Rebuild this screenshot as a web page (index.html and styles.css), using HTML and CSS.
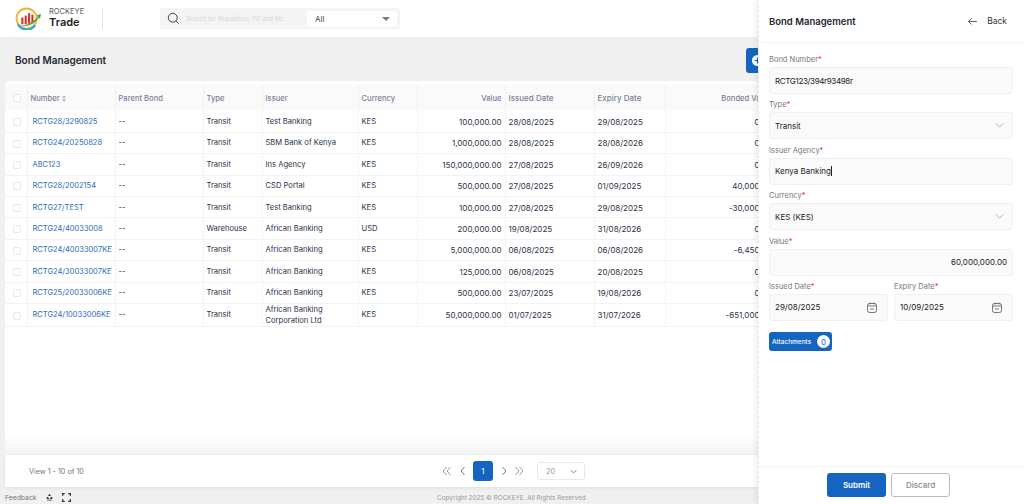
FILE: index.html
```html
<!DOCTYPE html>
<html lang="en">
<head>
<meta charset="utf-8">
<title>Bond Management</title>
<link rel="stylesheet" href="styles.css">
</head>
<body>
<div class="app">
  <header class="topbar">
    <div class="brand">
      <svg class="logo" viewBox="0 0 28 24" width="27" height="23">
        <circle cx="12" cy="12" r="10.5" fill="#fff" stroke="#f2b632" stroke-width="2"/>
        <path d="M3 18a10.5 10.5 0 0 0 18 1" fill="none" stroke="#35a8e0" stroke-width="2.4"/>
        <rect x="6.5" y="11" width="2.2" height="7" fill="#d9342b"/>
        <rect x="10" y="9" width="2.2" height="9" fill="#d9342b"/>
        <rect x="13.5" y="6.5" width="2.2" height="11" fill="#d9342b"/>
        <rect x="17" y="8" width="2.2" height="9" fill="#d9342b"/>
        <path d="M1 19c9 2 17-2 23-9l-2-1 5-2-1 6-1.200-2c-5 8-14 11-24 8z" fill="#4aa644"/>
      </svg>
      <div class="brand-text"><span class="brand-top">ROCKEYE</span><span class="brand-name">Trade</span></div>
    </div>
    <div class="search">
      <svg class="search-icon" viewBox="0 0 14 14" width="13" height="13"><circle cx="6.200" cy="6.200" r="4.800" fill="none" stroke="#333" stroke-width="1"/><path d="M9.800 9.800 12.500 12.500" stroke="#333" stroke-width="1"/></svg>
      <span class="search-hint">Search for Requisition, PO and Mc</span>
      <div class="search-select"><span>All</span><i class="caret"></i></div>
    </div>
  </header>

  <main class="content">
    <div class="page-head">
      <h1>Bond Management</h1>
      <span class="add-btn"><svg viewBox="0 0 11 11" width="11" height="11"><circle cx="5.500" cy="5.500" r="5.500" fill="#fff"/><path d="M2.500 5.500h6M5.500 2.500v6" stroke="#1565c0" stroke-width="1.200"/></svg></span>
    </div>
    <section class="card">
      <div class="table-wrap">
      <table>
        <colgroup>
          <col class="c-check"><col class="c-num"><col class="c-parent"><col class="c-type"><col class="c-issuer"><col class="c-cur"><col class="c-val"><col class="c-issued"><col class="c-expiry"><col class="c-bonded">
        </colgroup>
        <thead>
          <tr><th><i class="box"></i></th><th>Number <svg class="sort" viewBox="0 0 5 8" width="4" height="7"><path d="M2.500 0 5 3H0zM0 5h5L2.500 8z" fill="#aaa"/></svg></th><th>Parent Bond</th><th>Type</th><th>Issuer</th><th>Currency</th><th class="num">Value</th><th>Issued Date</th><th>Expiry Date</th><th class="num">Bonded Value</th></tr>
        </thead>
        <tbody>
          <tr><td><i class="box"></i></td><td class="link">RCTG28/3290825</td><td>--</td><td>Transit</td><td>Test Banking</td><td>KES</td><td class="num">100,000.00</td><td>28/08/2025</td><td>29/08/2025</td><td class="num">0.00</td></tr>
          <tr><td><i class="box"></i></td><td class="link">RCTG24/20250828</td><td>--</td><td>Transit</td><td>SBM Bank of Kenya</td><td>KES</td><td class="num">1,000,000.00</td><td>28/08/2025</td><td>28/08/2026</td><td class="num">0.00</td></tr>
          <tr><td><i class="box"></i></td><td class="link">ABC123</td><td>--</td><td>Transit</td><td>Ins Agency</td><td>KES</td><td class="num">150,000,000.00</td><td>27/08/2025</td><td>26/09/2026</td><td class="num">0.00</td></tr>
          <tr><td><i class="box"></i></td><td class="link">RCTG28/2002154</td><td>--</td><td>Transit</td><td>CSD Portal</td><td>KES</td><td class="num">500,000.00</td><td>27/08/2025</td><td>01/09/2025</td><td class="num">40,000.00</td></tr>
          <tr><td><i class="box"></i></td><td class="link">RCTG27/TEST</td><td>--</td><td>Transit</td><td>Test Banking</td><td>KES</td><td class="num">100,000.00</td><td>27/08/2025</td><td>29/08/2025</td><td class="num">-30,000.00</td></tr>
          <tr><td><i class="box"></i></td><td class="link">RCTG24/40033008</td><td>--</td><td>Warehouse</td><td>African Banking</td><td>USD</td><td class="num">200,000.00</td><td>19/08/2025</td><td>31/08/2026</td><td class="num">0.00</td></tr>
          <tr><td><i class="box"></i></td><td class="link">RCTG24/40033007KE</td><td>--</td><td>Transit</td><td>African Banking</td><td>KES</td><td class="num">5,000,000.00</td><td>06/08/2025</td><td>06/08/2026</td><td class="num">-6,450.00</td></tr>
          <tr><td><i class="box"></i></td><td class="link">RCTG24/30033007KE</td><td>--</td><td>Transit</td><td>African Banking</td><td>KES</td><td class="num">125,000.00</td><td>06/08/2025</td><td>20/08/2025</td><td class="num">0.00</td></tr>
          <tr><td><i class="box"></i></td><td class="link">RCTG25/20033006KE</td><td>--</td><td>Transit</td><td>African Banking</td><td>KES</td><td class="num">500,000.00</td><td>23/07/2025</td><td>19/08/2026</td><td class="num">0.00</td></tr>
          <tr><td><i class="box"></i></td><td class="link">RCTG24/10033006KE</td><td>--</td><td>Transit</td><td class="wrap">African Banking Corporation Ltd</td><td>KES</td><td class="num">50,000,000.00</td><td>01/07/2025</td><td>31/07/2026</td><td class="num">-651,000.00</td></tr>
        </tbody>
      </table>
      </div>
      <div class="spacer"></div>
      <div class="pager">
        <span class="view">View 1 - 10 of 10</span>
        <div class="pages">
          <svg class="pg" viewBox="0 0 10 10" width="10" height="10"><path d="M4.500 1 1 5l3.500 4M8.500 1 5 5l3.500 4" fill="none" stroke="#999" stroke-width="1"/></svg>
          <svg class="pg" viewBox="0 0 10 10" width="10" height="10"><path d="M6.500 1 3 5l3.500 4" fill="none" stroke="#777" stroke-width="1"/></svg>
          <span class="page-on">1</span>
          <svg class="pg" viewBox="0 0 10 10" width="10" height="10"><path d="M3.500 1 7 5 3.500 9" fill="none" stroke="#777" stroke-width="1"/></svg>
          <svg class="pg" viewBox="0 0 10 10" width="10" height="10"><path d="M1.500 1 5 5 1.500 9M5.500 1 9 5 5.500 9" fill="none" stroke="#999" stroke-width="1"/></svg>
          <div class="size"><span>20</span><svg viewBox="0 0 10 6" width="7" height="5"><path d="M1 1l4 4 4-4" fill="none" stroke="#666" stroke-width="1.200"/></svg></div>
        </div>
      </div>
    </section>
  </main>

  <footer class="footer">
    <div class="foot-left">
      <span>Feedback</span>
      <svg viewBox="0 0 12 12" width="9" height="9"><path d="M6 1 8 4H4zM2 6l2-1 1.500 3H2.500zM10 6 8 5 6.500 8h3z" fill="#333"/><path d="M3 9.500h6" stroke="#333"/></svg>
      <svg viewBox="0 0 10 10" width="9" height="9"><path d="M0 0h3v1.500H1.500V3H0zM7 0h3v3H8.500V1.500H7zM0 7h1.500v1.500H3V10H0zM8.500 7H10v3H7V8.500h1.500z" fill="#333"/></svg>
    </div>
    <span class="copy">Copyright 2025 © ROCKEYE. All Rights Reserved</span>
  </footer>
</div>

<aside class="panel">
  <div class="panel-head">
    <h2>Bond Management</h2>
    <span class="back"><svg viewBox="0 0 10 8" width="9" height="7"><path d="M4 .5.500 4 4 7.500M.5 4H10" fill="none" stroke="#222" stroke-width=".8"/></svg>Back</span>
  </div>
  <form class="form">
    <div class="field"><label>Bond Number<em>*</em></label><div class="input tight">RCTG123/394r93498r</div></div>
    <div class="field"><label>Type<em>*</em></label><div class="input">Transit<svg class="chev" viewBox="0 0 10 6" width="9" height="5"><path d="M.5.500l4.500 4.500L9.500.5" fill="none" stroke="#888" stroke-width=".8"/></svg></div></div>
    <div class="field"><label>Issuer Agency<em>*</em></label><div class="input">Kenya Banking<i class="cursor"></i></div></div>
    <div class="field"><label>Currency<em>*</em></label><div class="input">KES (KES)<svg class="chev" viewBox="0 0 10 6" width="9" height="5"><path d="M.5.500l4.500 4.500L9.500.5" fill="none" stroke="#888" stroke-width=".8"/></svg></div></div>
    <div class="field"><label>Value<em>*</em></label><div class="input right">60,000,000.00</div></div>
    <div class="two">
      <div class="field"><label>Issued Date<em>*</em></label><div class="input">29/08/2025<svg class="cal" viewBox="0 0 10 11" width="10" height="11"><rect x=".5" y="1.500" width="9" height="9" rx="2" fill="none" stroke="#555" stroke-width=".8"/><path d="M.5 4h9M3 .5v2M7 .5v2M3 7h4" stroke="#555" stroke-width=".8"/></svg></div></div>
      <div class="field"><label>Expiry Date<em>*</em></label><div class="input">10/09/2025<svg class="cal" viewBox="0 0 10 11" width="10" height="11"><rect x=".5" y="1.500" width="9" height="9" rx="2" fill="none" stroke="#555" stroke-width=".8"/><path d="M.5 4h9M3 .5v2M7 .5v2M3 7h4" stroke="#555" stroke-width=".8"/></svg></div></div>
    </div>
    <div class="attach"><span>Attachments</span><b>0</b></div>
  </form>
  <div class="panel-foot">
    <button type="button" class="btn primary">Submit</button>
    <button type="button" class="btn ghost">Discard</button>
  </div>
</aside>
</body>
</html>
```
FILE: styles.css
```css
* { box-sizing: border-box; }
html, body { margin: 0; height: 100%; overflow: hidden; }
body { display: flex; font-family: "Inter", "Liberation Sans", sans-serif; font-size: 8px; color: #2a3347; background: #f0f0f0; }
.app { width: 758px; flex: none; height: 504px; display: flex; flex-direction: column; overflow: hidden; }
.topbar { height: 37px; flex: none; background: #fff; display: flex; align-items: center; padding-left: 15px; }
.brand { display: flex; align-items: center; gap: 7px; width: 88px; height: 21px; border-right: 1px solid #e2e2e2; margin-top: -1px; }
.logo { flex: none; }
.brand-text { display: flex; flex-direction: column; line-height: 1; }
.brand-top { font-size: 7.500px; color: #555; }
.brand-name { font-size: 11px; font-weight: 600; color: #222; margin-top: 1px; }
.search { margin-left: 57px; width: 240px; height: 21px; background: #f4f4f4; border-radius: 3px; display: flex; align-items: center; padding: 0 3px 0 7px; }
.search-icon { flex: none; }
.search-hint { font-size: 6px; font-style: italic; color: #d4d4d4; margin-left: 6px; width: 117px; white-space: nowrap; overflow: hidden; }
.search-select { margin-left: 4px; flex: 1; height: 16px; background: #fff; border-radius: 2px; display: flex; align-items: center; justify-content: space-between; padding: 0 7px 0 8px; color: #444; font-size: 8px; }
.caret { width: 0; height: 0; border-left: 4px solid transparent; border-right: 4px solid transparent; border-top: 4.500px solid #777; }
.content { flex: 1; min-height: 0; display: flex; flex-direction: column; padding: 0 0 0 5px; }
.page-head { height: 44px; flex: none; display: flex; align-items: center; justify-content: space-between; padding: 2px 0 0 10px; }
h1 { margin: 0; font-size: 10px; font-weight: 600; color: #23272f; }
.add-btn { width: 24px; height: 25px; background: #1565c0; border-radius: 3px; display: flex; align-items: center; padding-left: 6px; margin-right: -12px; flex: none; }
.card { flex: 1; min-height: 0; display: flex; flex-direction: column; background: #fff; border-radius: 4px 0 0 4px; padding-top: 3px; }
.table-wrap { overflow: hidden; flex: none; }
table { border-collapse: collapse; table-layout: fixed; width: 770px; }
.c-check { width: 22px; } .c-num { width: 88px; } .c-parent { width: 88px; } .c-type { width: 59px; }
.c-issuer { width: 96px; } .c-cur { width: 59px; } .c-val { width: 88px; } .c-issued { width: 89px; }
.c-expiry { width: 71px; } .c-bonded { width: 110px; }
th { height: 27px; background: #fafafa; font-weight: 500; color: #7a7f9a; text-align: left; padding: 1px 3px 0; border-right: 1px solid #f0f0f0; font-size: 7.600px; white-space: nowrap; }
td { height: 21.400px; padding: 1px 3px 0; border-right: 1px solid #f3f3f3; border-bottom: 1px solid #f2f2f2; font-size: 7.600px; color: #2a3347; white-space: nowrap; line-height: 10.500px; }
td.num, td:nth-child(8), td:nth-child(9) { font-size: 8px; }
th:nth-child(8), th:nth-child(9) { font-size: 8px; }
.num { text-align: right; }
.link { color: #2b6cb8; padding-left: 5px; font-size: 7.500px; }
.wrap { white-space: normal; }
.box { display: block; width: 8px; height: 8px; margin-left: 5px; border: 1px solid #e8e8e8; border-radius: 2px; background: #fff; }
.sort { vertical-align: -1px; }
.spacer { flex: 1; min-height: 0; background: linear-gradient(#fff 85%, #f3f3f3); }
.pager { height: 32px; flex: none; position: relative; display: flex; align-items: center; padding-left: 24px; background: #fff; box-shadow: 0 1px 3px #ddd; }
.view { font-size: 7.200px; color: #777; }
.pages { position: absolute; left: 437px; top: 0; height: 100%; display: flex; align-items: center; gap: 5.500px; }
.pg { flex: none; }
.page-on { width: 20px; height: 20px; background: #1565c0; color: #fff; border-radius: 3px; display: flex; align-items: center; justify-content: center; font-size: 8px; }
.size { margin-left: 7.500px; width: 48px; height: 18px; border: 1px solid #e8e8e8; border-radius: 3px; display: flex; align-items: center; justify-content: space-between; padding: 0 7px 0 8px; color: #999; font-size: 7.500px; }
.footer { height: 17px; flex: none; position: relative; display: flex; align-items: center; padding: 4px 0 0 5px; color: #777; font-size: 6.800px; }
.foot-left { display: flex; align-items: center; gap: 8px; }
.copy { position: absolute; left: 437px; color: #999; font-size: 6.400px; }
.panel { position: relative; z-index: 1; width: 266px; flex: none; height: 504px; background: #fff; display: flex; flex-direction: column; box-shadow: -2px 0 6px rgba(0,0,0,.08); border-left: 1px dashed #e8e8e8; }
.panel-head { height: 43px; flex: none; display: flex; align-items: center; justify-content: space-between; padding: 0 17px 0 10px; border-bottom: 1px solid #f3f3f3; }
h2 { margin: 0; font-size: 9.500px; font-weight: 600; color: #23272f; }
.back { display: flex; align-items: center; gap: 10px; font-size: 8.500px; color: #333; }
.form { flex: 1; padding: 11px 11px 0 10px; display: flex; flex-direction: column; gap: 5.400px; }
.field { display: flex; flex-direction: column; gap: 2px; min-width: 0; }
label { font-size: 7.500px; color: #777; line-height: 11px; }
em { color: #e33; font-style: normal; }
.input { height: 27px; background: #fafafa; border: 1px solid #f0f0f4; border-radius: 3px; display: flex; align-items: center; justify-content: space-between; padding: 0 5px; font-size: 8px; color: #222; }
.input.right { justify-content: flex-end; }
.input.tight { letter-spacing: -.35px; }
.cursor { width: 1px; height: 10px; background: #222; margin-right: auto; }
.chev { margin-right: 3px; }
.cal { margin-right: 5px; }
.two { display: grid; grid-template-columns: 1fr 1fr; gap: 6px; }
.attach { width: 63px; height: 19px; margin-top: 6px; background: #1565c0; color: #fff; border-radius: 3px; display: flex; align-items: center; justify-content: space-between; padding: 0 2px 0 3px; font-size: 6.500px; font-weight: 500; }
.attach b { width: 13px; height: 13px; background: #fff; color: #1565c0; border-radius: 50%; display: flex; align-items: center; justify-content: center; font-weight: 400; font-size: 8px; }
.panel-foot { height: 38px; flex: none; border-top: 1px solid #f3f3f3; display: flex; gap: 5px; padding: 6px 0 0 68px; }
.btn { width: 59px; height: 24px; border-radius: 3px; font: 600 8px "Inter", "Liberation Sans", sans-serif; }
.primary { background: #1565c0; border: 0; color: #fff; }
.ghost { background: #fff; border: 1px solid #bbb; color: #888; font-weight: 500; }
```
